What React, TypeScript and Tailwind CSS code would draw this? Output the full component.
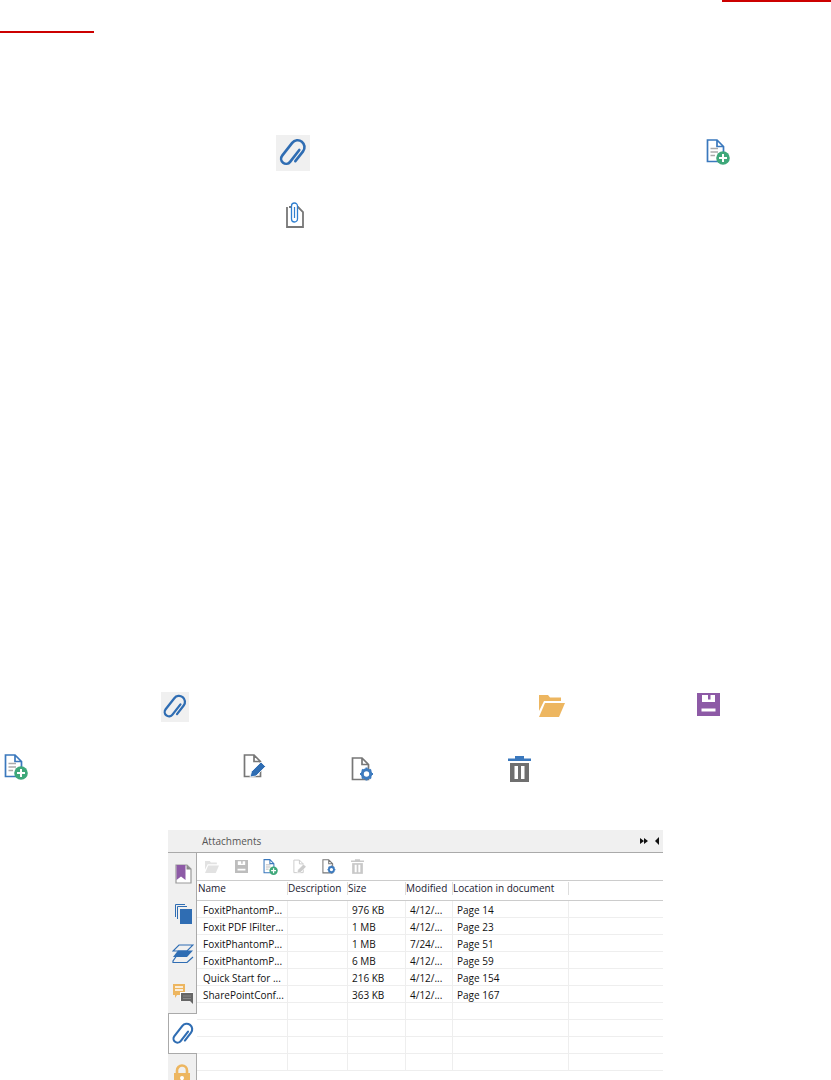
import React from "react";

type IconProps = { className?: string };

const Clip = ({ className, color = "#2f6db3" }: IconProps & { color?: string }) => (
  <svg viewBox="0 0 24 24" className={className} fill="none" stroke={color} strokeWidth="2.1" strokeLinecap="round">
    <g transform="translate(12 12) rotate(38)">
      <path d="M2.5 -5 V7 a4 4 0 0 1 -8 0 V-6 a5.5 5.5 0 0 1 11 0 V4" />
    </g>
  </svg>
);

const ClipDoc = ({ className }: IconProps) => (
  <svg viewBox="0 0 20 26" className={className} fill="none">
    <path d="M4 5 H13 L18 10 V25 H2 V5" stroke="#777" strokeWidth="1.8" />
    <path d="M6.5 17 V4 a3 3 0 0 1 6 0 V17 a3 3 0 0 1 -6 0" stroke="#2f7fd0" strokeWidth="1.3" fill="#fff" />
    <path d="M9.5 5 V16" stroke="#2f7fd0" strokeWidth="1.2" />
  </svg>
);

const Sheet = ({ stroke }: { stroke: string }) => (
  <path d="M1.5 1 H11 L17.5 7.5 V22.5 H1.5 Z M11 1 V7.5 H17.5" stroke={stroke} strokeWidth="1.7" fill="none" />
);

const DocPlus = ({ className, stroke = "#3a78bd", green = "#3ea87a" }: IconProps & { stroke?: string; green?: string }) => (
  <svg viewBox="0 0 24 26" className={className} fill="none">
    <Sheet stroke={stroke} />
    <path d="M4.5 9.5 H12 M4.5 13 H12 M4.5 16.5 H9" stroke="#aaa" strokeWidth="1.3" />
    <circle cx="17" cy="19" r="6.8" fill={green} />
    <path d="M17 15 V23 M13 19 H21" stroke="#fff" strokeWidth="2" />
  </svg>
);

const DocEdit = ({ className, stroke = "#777", blue = "#2f6db3" }: IconProps & { stroke?: string; blue?: string }) => (
  <svg viewBox="0 0 24 24" className={className} fill="none">
    <Sheet stroke={stroke} />
    <path d="M7 23 L8.5 17.5 L18 8 L22.5 12.5 L13 22 Z" fill={blue} stroke="#fff" strokeWidth="0.8" />
  </svg>
);

const DocGear = ({ className, stroke = "#777", blue = "#3d7bbf" }: IconProps & { stroke?: string; blue?: string }) => (
  <svg viewBox="0 0 23 24" className={className} fill="none">
    <Sheet stroke={stroke} />
    <circle cx="15.5" cy="17" r="4.2" stroke={blue} strokeWidth="3" fill="#fff" />
    <path d="M15.5 10.5 V12.5 M15.5 21.5 V23.5 M9 17 H11 M20 17 H22 M11 12.5 L12.3 13.8 M18.7 20.2 L20 21.5 M20 12.5 L18.7 13.8 M12.3 20.2 L11 21.5" stroke={blue} strokeWidth="2" />
  </svg>
);

const Trash = ({ className, lid = "#3a78bd", body = "#6f6f6f" }: IconProps & { lid?: string; body?: string }) => (
  <svg viewBox="0 0 23 26" className={className}>
    <path d="M7 0 H16 V2.5 H23 V5 H0 V2.5 H7 Z" fill={lid} />
    <path d="M2 7 H21 V26 H2 Z" fill={body} />
    <path d="M6.5 10 H10 V23 H6.5 Z M13 10 H16.5 V23 H13 Z" fill="#fff" />
  </svg>
);

const Folder = ({ className, color = "#edb660" }: IconProps & { color?: string }) => (
  <svg viewBox="0 0 26 22" className={className}>
    <path d="M0 0 H9 L11 2.5 H22 V6 H5 L0 16 Z" fill={color} />
    <path d="M6 8 H26 L20 22 H0 Z" fill={color} />
  </svg>
);

const Save = ({ className, color = "#8d5aa6" }: IconProps & { color?: string }) => (
  <svg viewBox="0 0 23 23" className={className}>
    <path fillRule="evenodd" d="M0 0 H23 V23 H0 Z M5 2 V9 H18 V2 H13.5 V6.5 H11 V2 Z M4.5 15.5 V18.5 H18.5 V15.5 Z" fill={color} />
  </svg>
);

const Bookmark = ({ className }: IconProps) => (
  <svg viewBox="0 0 17 20" className={className}>
    <path d="M1 1 H12 L16 5 V19 H1 Z" fill="#fff" stroke="#999" strokeWidth="1.2" />
    <path d="M11.5 1 L16 5.5 H11.5 Z" fill="#888" />
    <path d="M1.5 1 H10.5 V16 L6 12.5 L1.5 16 Z" fill="#8d5aa6" />
  </svg>
);

const Pages = ({ className }: IconProps) => (
  <svg viewBox="0 0 17 20" className={className} fill="none">
    <path d="M0.5 13 V0.5 H10" stroke="#2f6db3" />
    <path d="M2.5 15 V2.5 H12" stroke="#2f6db3" />
    <path d="M5 5 H17 V20 H5 Z" fill="#2f6db3" />
  </svg>
);

const Layers = ({ className }: IconProps) => (
  <svg viewBox="0 0 22 20" className={className} fill="none">
    <path d="M7 1 H21 L15 7 H1 Z" stroke="#2f6db3" strokeWidth="1.2" />
    <path d="M6 6.5 H21 L15 13 H1 Z" fill="#2f6db3" />
    <path d="M4.5 12 L1 17 V18.5 H15 L21 13" stroke="#2f6db3" strokeWidth="1.2" />
  </svg>
);

const Comments = ({ className }: IconProps) => (
  <svg viewBox="0 0 20 20" className={className}>
    <path d="M0 0 H12 V11 H4 L2 14 V11 H0 Z" fill="#edb660" />
    <path d="M2 3 H10 M2 6 H10" stroke="#fff" strokeWidth="1.3" />
    <path d="M7 8 H20 V20 L17 17 H7 Z" fill="#fff" />
    <path d="M8 9 H20 V20 L17 17 H8 Z" fill="#666" />
    <path d="M10 12 H18 M10 14.5 H18" stroke="#888" strokeWidth="1" />
  </svg>
);

const Lock = ({ className }: IconProps) => (
  <svg viewBox="0 0 18 22" className={className}>
    <path d="M4 9 V6.5 a5 5 0 0 1 10 0 V9" fill="none" stroke="#edb660" strokeWidth="2.6" />
    <path d="M1 9 H17 V22 H1 Z" fill="#edb660" />
    <circle cx="9" cy="14" r="2" fill="#fff" />
    <path d="M8 14 H10 V18 H8 Z" fill="#fff" />
  </svg>
);

const widths = ["w-[91px]", "w-[60px]", "w-[58px]", "w-[47px]", "w-[116px]"];

const rows = [
  ["FoxitPhantomP...", "", "976 KB", "4/12/...", "Page 14"],
  ["Foxit PDF IFilter...", "", "1 MB", "4/12/...", "Page 23"],
  ["FoxitPhantomP...", "", "1 MB", "7/24/...", "Page 51"],
  ["FoxitPhantomP...", "", "6 MB", "4/12/...", "Page 59"],
  ["Quick Start for ...", "", "216 KB", "4/12/...", "Page 154"],
  ["SharePointConf...", "", "363 KB", "4/12/...", "Page 167"],
  ["", "", "", "", ""],
  ["", "", "", "", ""],
  ["", "", "", "", ""],
  ["", "", "", "", ""],
];

const headers = ["Name", "Description", "Size", "Modified", "Location in document"];

const AttachmentsPanel = () => (
  <div className="w-[495px] ml-[168px] h-[250px] flex flex-col font-['Open_Sans',sans-serif] text-[10px] text-[#111]">
    <div className="h-[23px] shrink-0 bg-[#f0f0f0] border-b border-[#aaa] flex items-center pl-[34px] pr-[4px] text-[#555]">
      <span className="flex-1">Attachments</span>
      <span className="flex items-center gap-[6px] text-[#111]">
        <svg viewBox="0 0 9 6" className="w-[9px] h-[6px]"><path d="M0 0 L4 3 L0 6 Z M4 0 L8 3 L4 6 Z" fill="#111" /></svg>
        <svg viewBox="0 0 4 8" className="w-[4px] h-[8px]"><path d="M4 0 L0 4 L4 8 Z" fill="#111" /></svg>
      </span>
    </div>
    <div className="flex flex-1 min-h-0">
      <div className="w-[29px] shrink-0 flex flex-col bg-[#f0f0f0]">
        <div className="flex-1 border-r border-[#aaa] pt-[11px] flex flex-col items-center pl-[2px]">
          <Bookmark className="w-[17px] h-[20px]" />
          <Pages className="w-[17px] h-[20px] mt-[20px]" />
          <Layers className="w-[22px] h-[20px] mt-[20px]" />
          <Comments className="w-[20px] h-[20px] mt-[20px]" />
        </div>
        <div className="h-[41px] shrink-0 bg-white border-l border-y border-[#aaa] flex items-center justify-center">
          <Clip className="w-[24px] h-[24px]" />
        </div>
        <div className="h-[26px] shrink-0 border-r border-[#aaa] pt-[10px] flex justify-center overflow-hidden">
          <Lock className="w-[18px] h-[22px] shrink-0" />
        </div>
      </div>
      <div className="flex-1 min-w-0 bg-white flex flex-col">
        <div className="h-[28px] shrink-0 border-b border-[#ccc] flex items-center pl-[8px]">
          <Folder className="w-[14px] h-[12px]" color="#e2e2e2" />
          <Save className="w-[13px] h-[13px] ml-[16px]" color="#bdbdbd" />
          <DocPlus className="w-[15px] h-[16px] ml-[15px]" />
          <DocEdit className="w-[14px] h-[15px] ml-[15px]" stroke="#ccc" blue="#ccc" />
          <DocGear className="w-[14px] h-[15px] ml-[15px]" />
          <Trash className="w-[13px] h-[15px] ml-[15px]" lid="#c8c8c8" body="#c8c8c8" />
        </div>
        <div className="h-[20px] shrink-0 flex border-b border-[#ccc] text-[#1a1a30]">
          {headers.map((h, i) => (
            <div key={h} className={`${widths[i]} ${i === 0 ? "pl-[1px]" : "pl-0"} shrink-0 h-[13px] leading-[13px] mt-[1px] border-r border-[#ddd] whitespace-nowrap`}>
              {h}
            </div>
          ))}
        </div>
        {rows.map((r, i) => (
          <div key={i} className="h-[17px] shrink-0 flex border-b border-[#eee]">
            {r.map((c, j) => (
              <div key={j} className={`${widths[j]} ${j === 0 ? "pl-[6px]" : "pl-[4px]"} shrink-0 leading-[18px] border-r border-[#eee] whitespace-nowrap overflow-hidden`}>
                {c}
              </div>
            ))}
          </div>
        ))}
      </div>
    </div>
  </div>
);

export default function App() {
  return (
    <div className="w-[831px] h-[1080px] bg-white overflow-hidden">
      <div className="h-[2px] w-[109px] ml-auto bg-[#cc0000]" />
      <div className="h-[2px] w-[94px] mt-[29px] bg-[#cc0000]" />

      <div className="flex items-start mt-[102px] h-[36px]">
        <div className="ml-[276px] w-[34px] h-[36px] bg-[#f0f0f0] flex items-center justify-center">
          <Clip className="w-[30px] h-[30px]" />
        </div>
        <DocPlus className="w-[24px] h-[26px] ml-[396px] mt-[4px]" />
      </div>

      <div className="mt-[31px] ml-[285px] h-[29px]">
        <ClipDoc className="w-[20px] h-[26px]" />
      </div>

      <div className="flex items-start mt-[461px] h-[30px]">
        <div className="ml-[161px] w-[28px] h-[30px] bg-[#f0f0f0] flex items-center justify-center">
          <Clip className="w-[26px] h-[26px]" />
        </div>
        <Folder className="w-[26px] h-[22px] ml-[350px] mt-[3px]" />
        <Save className="w-[23px] h-[23px] ml-[132px] mt-[1px]" />
      </div>

      <div className="flex items-start mt-[32px] h-[28px]">
        <DocPlus className="w-[24px] h-[26px] ml-[4px]" />
        <DocEdit className="w-[24px] h-[24px] ml-[215px]" />
        <DocGear className="w-[23px] h-[24px] ml-[84px] mt-[3px]" />
        <Trash className="w-[23px] h-[26px] ml-[134px] mt-[2px]" />
      </div>

      <div className="mt-[48px]">
        <AttachmentsPanel />
      </div>
    </div>
  );
}
